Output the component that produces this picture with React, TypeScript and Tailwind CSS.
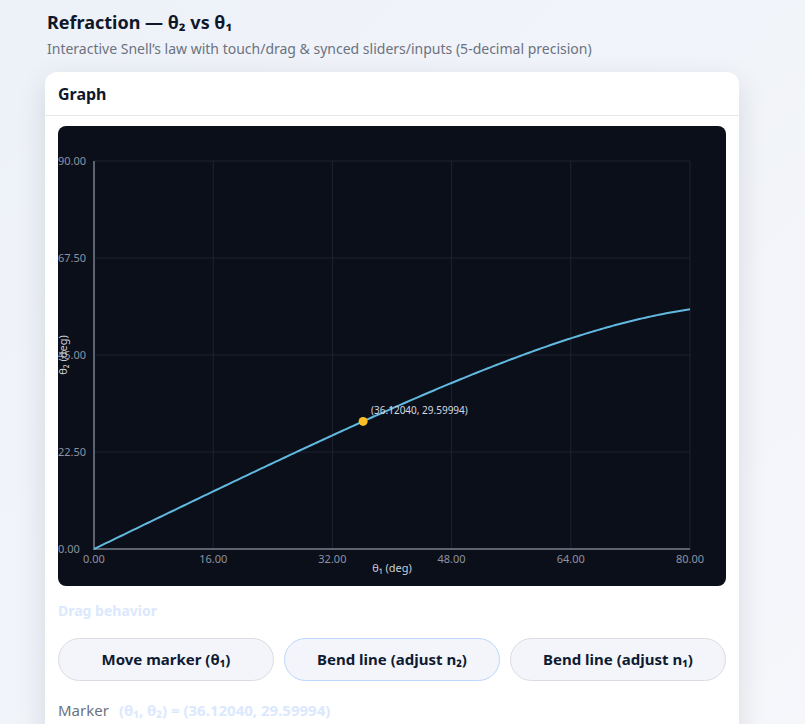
import React from "react";

const W = 668;
const H = 460;
const X0 = 36;
const X1 = 632;
const YT = 35;
const YB = 423;

const n1n2 = Math.sin((36.1204 * Math.PI) / 180) / Math.sin((29.59994 * Math.PI) / 180);

function sx(v: number) {
  return X0 + (v / 80) * (X1 - X0);
}
function sy(v: number) {
  return YB - (v / 90) * (YB - YT);
}

function Chart() {
  const pts: string[] = [];
  for (let i = 0; i <= 200; i++) {
    const t1 = (i / 200) * 80;
    const s = Math.sin((t1 * Math.PI) / 180) / n1n2;
    const t2 = (Math.asin(Math.min(1, s)) * 180) / Math.PI;
    pts.push(`${sx(t1).toFixed(2)},${sy(t2).toFixed(2)}`);
  }
  const xt = [0, 16, 32, 48, 64, 80];
  const yt = [0, 22.5, 45, 67.5, 90];
  return (
    <svg width={W} height={H} viewBox={`0 0 ${W} ${H}`} className="block">
      {xt.map((v) => (
        <line key={"gx" + v} x1={sx(v)} x2={sx(v)} y1={YT} y2={YB} stroke="#1c2330" strokeWidth={1} />
      ))}
      {yt.map((v) => (
        <line key={"gy" + v} x1={X0} x2={X1} y1={sy(v)} y2={sy(v)} stroke="#1c2330" strokeWidth={1} />
      ))}
      <line x1={X0} x2={X0} y1={YT} y2={YB + 1} stroke="#5b6270" strokeWidth={2} />
      <line x1={X0} x2={X1} y1={YB} y2={YB} stroke="#5b6270" strokeWidth={2} />
      {yt.map((v) => (
        <text
          key={"ly" + v}
          x={0}
          y={sy(v) + 4}
          fontSize={11}
          fill="#8b93a3"
          fontFamily="'Noto Sans', sans-serif"
        >
          {v.toFixed(2)}
        </text>
      ))}
      {xt.map((v) => (
        <text
          key={"lx" + v}
          x={sx(v)}
          y={YB + 14}
          fontSize={11}
          fill="#8b93a3"
          textAnchor="middle"
          fontFamily="'Noto Sans', sans-serif"
        >
          {v.toFixed(2)}
        </text>
      ))}
      <text
        x={(X0 + X1) / 2}
        y={YB + 23}
        fontSize={11}
        fill="#c9ced8"
        textAnchor="middle"
        fontFamily="'Noto Sans', sans-serif"
      >
        θ₁ (deg)
      </text>
      <text
        x={0}
        y={0}
        transform={`translate(9 ${(YT + YB) / 2}) rotate(-90)`}
        fontSize={11}
        fill="#c9ced8"
        textAnchor="middle"
        fontFamily="'Noto Sans', sans-serif"
      >
        θ₂ (deg)
      </text>
      <polyline points={pts.join(" ")} fill="none" stroke="#62b9e0" strokeWidth={2} strokeLinejoin="round" />
      <circle cx={sx(36.1204)} cy={sy(29.59994)} r={4.5} fill="#fbbf24" />
      <text
        x={sx(36.1204) + 8}
        y={sy(29.59994) - 7}
        fontSize={10}
        fill="#d4d8e0"
        fontFamily="'Noto Sans', sans-serif"
      >
        (36.12040, 29.59994)
      </text>
    </svg>
  );
}

export default function App() {
  return (
    <div
      className="min-h-[724px] w-full bg-gradient-to-br from-[#edf1f8] to-[#f6f7fb] pl-[45px] pt-[10px]"
      style={{ fontFamily: "'Noto Sans', 'Segoe UI', sans-serif" }}
    >
      <h1 className="ml-[2px] text-[18px] font-bold leading-[24px] text-[#0f172a]">Refraction — θ₂ vs θ₁</h1>
      <p className="ml-[2px] mt-[5px] text-[14px] leading-[20px] text-[#6b7280]">
        Interactive Snell’s law with touch/drag &amp; synced sliders/inputs (5-decimal precision)
      </p>
      <div className="mt-[13px] w-[694px] rounded-[12px] bg-white shadow-[0_10px_30px_rgba(15,23,42,0.12)]">
        <div className="flex h-[44px] items-center border-b border-[#e5e7eb] px-[13px]">
          <span className="text-[16px] font-bold text-[#0f172a]">Graph</span>
        </div>
        <div className="px-[13px] pt-[10px]">
          <div className="overflow-hidden rounded-[8px] bg-[#0b0f19]">
            <Chart />
          </div>
          <div className="mt-[15px] text-[14px] font-bold leading-[20px] text-[#dbe8fd]">Drag behavior</div>
          <div className="mt-[17px] grid grid-cols-3 gap-[10px]">
            <button className="h-[43px] rounded-full border border-[#d9dce3] bg-[#f3f5fa] text-[15px] font-bold text-[#0f1b33]">
              Move marker (θ₁)
            </button>
            <button className="h-[43px] rounded-full border border-[#bcd6fb] bg-[#f3f5fa] text-[15px] font-bold text-[#0f1b33]">
              Bend line (adjust n₂)
            </button>
            <button className="h-[43px] rounded-full border border-[#d9dce3] bg-[#f3f5fa] text-[15px] font-bold text-[#0f1b33]">
              Bend line (adjust n₁)
            </button>
          </div>
          <div className="mt-[18px] flex items-center gap-[10px] pb-[20px] text-[15px] leading-[22px]">
            <span className="text-[#6b7280]">Marker</span>
            <span className="font-bold text-[#dbe8fd]">(θ₁, θ₂) = (36.12040, 29.59994)</span>
          </div>
        </div>
      </div>
    </div>
  );
}
